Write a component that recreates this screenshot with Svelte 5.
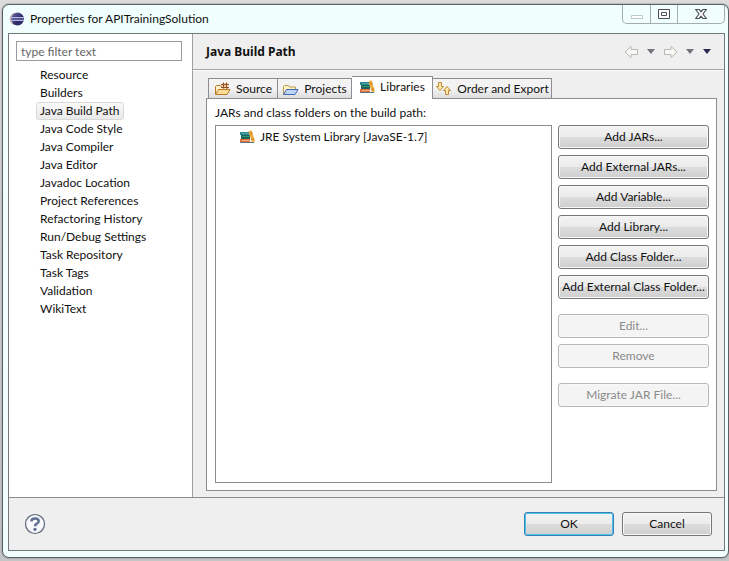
<script>
  const pages = ['Resource', 'Builders', 'Java Build Path', 'Java Code Style', 'Java Compiler', 'Java Editor', 'Javadoc Location', 'Project References', 'Refactoring History', 'Run/Debug Settings', 'Task Repository', 'Task Tags', 'Validation', 'WikiText'];
  const tabs = [
    { id: 'source', label: 'Source' },
    { id: 'projects', label: 'Projects' },
    { id: 'libraries', label: 'Libraries' },
    { id: 'order', label: 'Order and Export' }
  ];
  const groups = [
    { disabled: false, items: ['Add JARs...', 'Add External JARs...', 'Add Variable...', 'Add Library...', 'Add Class Folder...', 'Add External Class Folder...'] },
    { disabled: true, items: ['Edit...', 'Remove'] },
    { disabled: true, items: ['Migrate JAR File...'] }
  ];
  let page = $state('Java Build Path');
  let tab = $state('libraries');
</script>

{#snippet books()}
  <svg width="16" height="16" viewBox="0 0 16 16" aria-hidden="true">
    <path d="M1 3h9v3H1z" fill="#2b8a8c" /><path d="M3 4.500h7" stroke="#4fa39a" />
    <path d="M2 6h9v4H2z" fill="#1d5f63" /><path d="M3 7.500h8" stroke="#2f9a5a" />
    <path d="M1 10h10v3H1z" fill="#e0703a" /><path d="M3 11.500h8" stroke="#f2a77c" />
    <path d="M1 13.500h14" stroke="#5b7686" />
    <path d="M9.500 2.200l3-1L16 12.500l-3.200.5z" fill="#eba93a" />
    <path d="M10.500 5l3-1M12.300 10.500l2.900-.7" stroke="#c47f1c" />
  </svg>
{/snippet}

{#snippet folder(kind)}
  {@const line = kind === 'source' ? '#b8792a' : '#4565b5'}
  {@const fill = kind === 'source' ? '#ffdc95' : '#b9d5f7'}
  <svg width="17" height="16" viewBox="0 0 17 16" aria-hidden="true">
    <path d="M1.500 13.500v-8l1-1h4l1 1.500h6v3" fill={kind === 'source' ? '#fff0c8' : '#fff3c4'} stroke={kind === 'source' ? line : '#b99a4f'} />
    <path d="M1.500 13.500L4.500 8.500h11.500l-3 5z" fill={fill} stroke={line} stroke-linejoin="round" />
    {#if kind === 'source'}
      <path d="M8 2h6v5.500H8z" fill="#f3cfa0" />
      <path d="M7 3.500h8M7 6.500h8M9.500 1.500v6M12.500 1.500v6" stroke="#8e5230" />
    {/if}
  </svg>
{/snippet}

{#snippet arrows()}
  <svg width="17" height="16" viewBox="0 0 17 16" aria-hidden="true">
    <g fill="#ffe9ae" stroke="#c0892e" stroke-linejoin="round">
      <path d="M3.500 1.500h3v4h2L5 9.500 1.500 5.500h2z" />
      <path d="M10.500 13.500h3v-4h2L12 5.500l-3.500 4h2z" />
    </g>
  </svg>
{/snippet}

{#snippet navArrow(flip)}
  <svg class:flip width="15" height="14" viewBox="0 0 15 14" aria-hidden="true">
    <path d="M1 7l6-5.500v3h6.500v5H7v3z" fill="#f8f8f5" stroke="#b8b8b2" stroke-linejoin="round" />
  </svg>
{/snippet}

{#snippet down(color)}
  <svg width="10" height="6" viewBox="0 0 10 6" aria-hidden="true"><path d="M1 0h8L5 5z" fill={color} /></svg>
{/snippet}

<div class="desktop">
  <div class="window">
    <header class="titlebar">
      <svg width="16" height="16" viewBox="0 0 16 16" aria-hidden="true">
        <defs><linearGradient id="globe" x1="0" y1="0" x2="1" y2="1"><stop offset="0" stop-color="#7169a8" /><stop offset=".6" stop-color="#2f2a68" /><stop offset="1" stop-color="#38306f" /></linearGradient></defs>
        <path d="M5 2Q1 4 1 8t4 6" fill="none" stroke="#c9a6a4" />
        <circle cx="8.500" cy="8" r="6.500" fill="url(#globe)" />
        <path d="M2 6.500h13M2 9.500h13" stroke="#b5b8dc" /><path d="M2 8h13" stroke="#7480bd" />
      </svg>
      <h1>Properties for APITrainingSolution</h1>
      <div class="controls">
        <button type="button" aria-label="Minimize" disabled><svg width="12" height="12" viewBox="0 0 12 12"><path d="M.5 7.500h11v3H.5z" fill="#fff" stroke="#bcc6c8" /></svg></button>
        <button type="button" aria-label="Maximize"><svg width="12" height="12" viewBox="0 0 12 12"><path d="M.5 1.500h11v9H.5z" fill="#fff" stroke="#4a505a" /><path d="M3.500 4.500h5v3h-5z" fill="none" stroke="#4a505a" /></svg></button>
        <button type="button" class="close" aria-label="Close"><svg width="12" height="12" viewBox="0 0 12 12"><path d="M.7 1.500h3.500L6 3.700l1.800-2.200h3.500L8 6l3.300 4.500H7.800L6 8.300l-1.800 2.200H.7L4 6z" fill="#fff" stroke="#4a505a" stroke-width="1.200" /></svg></button>
      </div>
    </header>

    <div class="client">
      <div class="main">
        <nav>
          <input type="text" placeholder="type filter text" aria-label="Filter pages" />
          <ul>
            {#each pages as item}
              <li><button type="button" class:selected={item === page} onclick={() => (page = item)}>{item}</button></li>
            {/each}
          </ul>
        </nav>

        <section class="page">
          <div class="heading">
            <h2>Java Build Path</h2>
            <div class="history">
              <button type="button" aria-label="Back" disabled>{@render navArrow(false)}</button>
              <button type="button" aria-label="Back history">{@render down('#73737a')}</button>
              <button type="button" aria-label="Forward" disabled>{@render navArrow(true)}</button>
              <button type="button" aria-label="Forward history">{@render down('#73737a')}</button>
              <button type="button" aria-label="Menu">{@render down('#292850')}</button>
            </div>
          </div>

          <div class="body">
            <div class="tabs" role="tablist">
              {#each tabs as t}
                <button type="button" role="tab" class={t.id} aria-selected={t.id === tab} onclick={() => (tab = t.id)}>
                  {#if t.id === 'libraries'}{@render books()}{:else if t.id === 'order'}{@render arrows()}{:else}{@render folder(t.id)}{/if}
                  <span>{t.label}</span>
                </button>
              {/each}
            </div>
            <div class="panel" role="tabpanel">
              <p id="jars">JARs and class folders on the build path:</p>
              <div class="columns">
                <ul class="list" aria-labelledby="jars">
                  <li>{@render books()}<span>JRE System Library [JavaSE-1.7]</span></li>
                </ul>
                <div class="actions">
                  {#each groups as group}
                    <div class="group">
                      {#each group.items as label}
                        <button type="button" class="push" disabled={group.disabled}>{label}</button>
                      {/each}
                    </div>
                  {/each}
                </div>
              </div>
            </div>
          </div>
        </section>
      </div>

      <footer>
        <button type="button" class="help" aria-label="Help">
          <svg width="22" height="22" viewBox="0 0 22 22" aria-hidden="true">
            <circle cx="11" cy="11" r="9.500" fill="#f7f8fb" stroke="#5c6579" stroke-width="1.200" />
            <path d="M7.300 8.300Q7.500 5.500 11 5.500q3.700 0 3.700 2.700 0 1.600-1.900 2.500Q11 11.600 11 13.300" fill="none" stroke="#5e6f91" stroke-width="2.500" />
            <circle cx="11" cy="16.300" r="1.600" fill="#5e6f91" />
          </svg>
        </button>
        <button type="button" class="push default">OK</button>
        <button type="button" class="push">Cancel</button>
      </footer>
    </div>
  </div>
</div>

<style>
  :global(body) { margin: 0; }
  * { box-sizing: border-box; }
  .desktop {
    min-height: 100vh;
    display: flex;
    padding: 4px 0 3px 2px;
    background: linear-gradient(#dcdcdc, #c4c6c6);
    font: 12px/18px Lato, "Open Sans", sans-serif;
    color: #111;
  }
  button, input { font: inherit; color: inherit; margin: 0; }
  button { padding: 0; border: 0; background: none; }
  h1, h2, p, ul { margin: 0; padding: 0; font-size: 12px; }
  ul { list-style: none; }
  svg { display: block; flex: none; }
  .window {
    flex: 1;
    min-width: 0;
    display: flex;
    flex-direction: column;
    padding: 0 3px 6px 5px;
    border: 1px solid #586064;
    border-radius: 7px;
    background: #f0fffe;
    box-shadow: 0 0 2px #777;
  }
  .titlebar { display: flex; align-items: center; height: 28px; gap: 5px; padding-left: 1px; }
  h1 { flex: 1; font-weight: 400; }
  .controls {
    align-self: flex-start;
    display: flex;
    height: 19px;
    border: 1px solid #a3acae;
    border-top: 0;
    border-radius: 0 0 5px 5px;
  }
  .controls button { width: 27px; display: grid; place-items: center; }
  .controls button + button { border-left: 1px solid #a3acae; }
  .controls .close { width: 47px; }
  .client { flex: 1; display: flex; flex-direction: column; border: 1px solid #71797c; background: #efefef; }
  .main { flex: 1; display: flex; min-height: 0; border-bottom: 1px solid #8c8c8c; }
  nav { width: 184px; padding: 7px 10px 7px 7px; background: #fff; border-right: 1px solid #a0a0a0; }
  nav input {
    display: block;
    width: 100%;
    height: 20px;
    padding: 0 4px;
    border: 1px solid #9a9da0;
    border-radius: 0;
    background: #fff;
  }
  nav input::placeholder { color: #666; opacity: 1; }
  nav ul { padding: 5px 0 0 20px; }
  nav li { display: flex; height: 18px; }
  nav li button { display: flex; align-items: center; padding: 0 3px; border: 1px solid transparent; border-radius: 3px; white-space: nowrap; }
  nav .selected { border-color: #d9d9d9; background: linear-gradient(#fafafa, #e9e9e9); }
  .page { flex: 1; min-width: 0; display: flex; flex-direction: column; }
  .heading { display: flex; align-items: center; justify-content: space-between; height: 36px; padding: 0 12px 0 13px; border-bottom: 1px solid #a6a6a6; box-shadow: 0 1px #fafafa; }
  h2 { font-family: "Noto Sans", sans-serif; font-weight: 700; }
  .history { display: flex; align-items: center; gap: 7px; }
  .flip { transform: scaleX(-1); }
  .body { flex: 1; display: flex; flex-direction: column; padding: 6px 7px 6px 13px; }
  .tabs { display: flex; align-items: flex-end; height: 22px; padding-left: 2px; }
  .tabs button {
    display: flex;
    align-items: center;
    justify-content: center;
    gap: 5px;
    width: 70px;
    height: 20px;
    border: 1px solid #8b8d92;
    border-bottom: 0;
    border-left-width: 0;
    background: linear-gradient(#f3f3f3 50%, #dedede);
    white-space: nowrap;
  }
  .tabs .source { width: 70px; border-left-width: 1px; }
  .tabs .projects { width: 74px; }
  .tabs .libraries { width: 81px; }
  .tabs .order { width: 119px; }
  .tabs button[aria-selected='true'] { position: relative; height: 23px; margin-bottom: -1px; padding-bottom: 2px; background: #fff; }
  .panel { flex: 1; display: flex; flex-direction: column; padding: 5px 7px 7px 8px; border: 1px solid #8b8d92; background: #fff; }
  .panel p { height: 21px; }
  .columns { flex: 1; display: flex; gap: 6px; }
  .list { flex: 1; min-width: 0; padding: 2px 23px; border: 1px solid #8b8d92; }
  .list li { display: flex; align-items: center; gap: 5px; height: 18px; }
  .actions { display: flex; flex-direction: column; gap: 15px; width: 151px; }
  .group { display: flex; flex-direction: column; gap: 6px; }
  .push {
    height: 24px;
    border: 1px solid #777;
    border-radius: 3px;
    background: linear-gradient(#f3f3f3, #ebebeb 50%, #dddddd 50%, #cfcfcf);
    box-shadow: inset 0 0 0 1px #f8f8f8;
    white-space: nowrap;
  }
  .push:disabled { border-color: #b5b8bb; background: #f4f4f4; color: #8a8a8a; }
  footer { display: flex; align-items: center; gap: 8px; height: 52px; padding: 0 12px 0 15px; }
  footer .push { width: 90px; }
  .help { margin-right: auto; }
  footer .default { border-color: #3c7fb1; box-shadow: inset 0 0 0 1px #48c4ec; }
</style>
